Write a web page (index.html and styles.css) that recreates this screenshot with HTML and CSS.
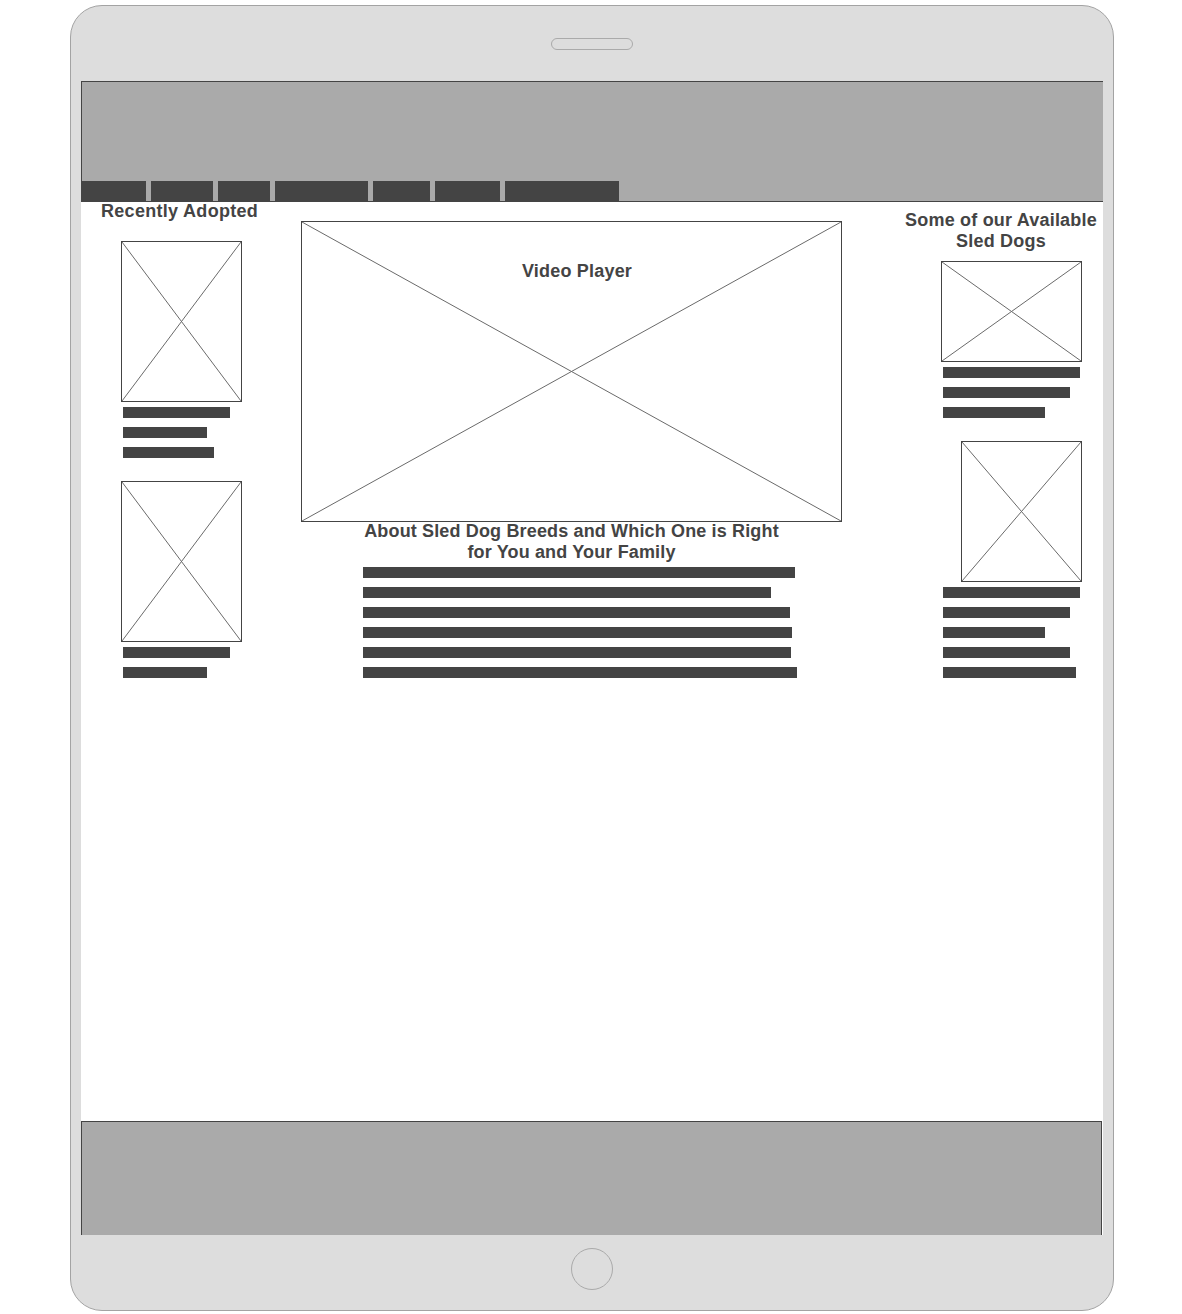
FILE: index.html
```html
<!DOCTYPE html>
<html lang="en">
<head>
    <meta charset="UTF-8">
    <meta name="viewport" content="width=device-width, initial-scale=1.0">
    <title>Sled Dog Rescue - Tablet Wireframe</title>
    <link rel="stylesheet" href="styles.css">
</head>
<body>

<div class="tablet">
    <div class="bezel-top"><div class="speaker"></div></div>

    <div class="screen">
        <header class="site-header">
            <nav class="nav">
                <span class="nav-item"></span>
                <span class="nav-item"></span>
                <span class="nav-item"></span>
                <span class="nav-item"></span>
                <span class="nav-item"></span>
                <span class="nav-item"></span>
                <span class="nav-item"></span>
            </nav>
        </header>

        <main class="content">
            <aside class="col-left">
                <h2 class="col-title">Recently Adopted</h2>

                <div class="thumb thumb-tall">
                    <svg class="cross" viewBox="0 0 100 100" preserveAspectRatio="none"><line x1="0" y1="0" x2="100" y2="100"/><line x1="100" y1="0" x2="0" y2="100"/></svg>
                </div>
                <div class="lines">
                    <span class="line w107"></span>
                    <span class="line w84"></span>
                    <span class="line w91"></span>
                </div>

                <div class="thumb thumb-tall next">
                    <svg class="cross" viewBox="0 0 100 100" preserveAspectRatio="none"><line x1="0" y1="0" x2="100" y2="100"/><line x1="100" y1="0" x2="0" y2="100"/></svg>
                </div>
                <div class="lines">
                    <span class="line w107"></span>
                    <span class="line w84"></span>
                </div>
            </aside>

            <section class="col-center">
                <div class="video">
                    <svg class="cross" viewBox="0 0 100 100" preserveAspectRatio="none"><line x1="0" y1="0" x2="100" y2="100"/><line x1="100" y1="0" x2="0" y2="100"/></svg>
                    <div class="video-label">Video Player</div>
                </div>
                <h2 class="about-title">About Sled Dog Breeds and Which One is Right for You and Your Family</h2>
                <div class="lines">
                    <span class="line w432"></span>
                    <span class="line w408"></span>
                    <span class="line w427"></span>
                    <span class="line w429"></span>
                    <span class="line w428"></span>
                    <span class="line w434"></span>
                </div>
            </section>

            <aside class="col-right">
                <h2 class="col-title">Some of our Available Sled Dogs</h2>

                <div class="thumb thumb-wide">
                    <svg class="cross" viewBox="0 0 100 100" preserveAspectRatio="none"><line x1="0" y1="0" x2="100" y2="100"/><line x1="100" y1="0" x2="0" y2="100"/></svg>
                </div>
                <div class="lines">
                    <span class="line w137"></span>
                    <span class="line w127"></span>
                    <span class="line w102"></span>
                </div>

                <div class="thumb thumb-portrait next">
                    <svg class="cross" viewBox="0 0 100 100" preserveAspectRatio="none"><line x1="0" y1="0" x2="100" y2="100"/><line x1="100" y1="0" x2="0" y2="100"/></svg>
                </div>
                <div class="lines">
                    <span class="line w137"></span>
                    <span class="line w127"></span>
                    <span class="line w102"></span>
                    <span class="line w127"></span>
                    <span class="line w133"></span>
                </div>
            </aside>
        </main>

        <footer class="site-footer"></footer>
    </div>

    <div class="bezel-bottom"><div class="home-btn"></div></div>
</div>

</body>
</html>
```

FILE: styles.css
```css
* { margin: 0; padding: 0; box-sizing: border-box; font-family: 'Liberation Sans', Arial, sans-serif; }

body { background-color: white; }

/* device frame */
.tablet { width: 1044px; height: 1306px; margin: 5px 0 0 70px; padding: 0 10px;
          background-color: #dddddd; border: 1px solid #a3a3a3; border-radius: 32px;
          display: flex; flex-direction: column; }

.bezel-top { height: 75px; display: flex; align-items: center; justify-content: center; }
.speaker { width: 82px; height: 12px; border: 1px solid #aaaaaa; border-radius: 6px; }

.bezel-bottom { height: 75px; display: flex; justify-content: center; padding-top: 13px; }
.home-btn { width: 42px; height: 42px; border: 1px solid #aaaaaa; border-radius: 50%; }

.screen { height: 1154px; background-color: white; display: flex; flex-direction: column; }

/* header + nav */
.site-header { height: 121px; background-color: #aaaaaa; border: 1px solid #444444; border-right: none;
               display: flex; flex-direction: column; justify-content: flex-end; }
.nav { display: flex; gap: 5px; height: 20px; }
.nav-item { height: 20px; background-color: #444444; }
.nav-item:nth-child(1) { width: 64px; }
.nav-item:nth-child(2) { width: 62px; }
.nav-item:nth-child(3) { width: 52px; }
.nav-item:nth-child(4) { width: 93px; }
.nav-item:nth-child(5) { width: 57px; }
.nav-item:nth-child(6) { width: 65px; }
.nav-item:nth-child(7) { width: 114px; }

/* main 3 columns */
.content { flex: 1; display: grid; grid-template-columns: 220px 541px 1fr; align-items: start; }

h2 { font-size: 18px; line-height: 21px; font-weight: bold; color: #444444; letter-spacing: 0.15px; }

.col-left .col-title { margin-top: -1px; padding-left: 20px; letter-spacing: 0.3px; }
.col-left .thumb { margin: 19px 0 0 40px; }
.col-left .thumb.next { margin-top: 23px; }
.col-left .lines { margin-left: 42px; }

.col-right .col-title { margin: 8px 0 0 57px; width: 204px; text-align: center; letter-spacing: 0.2px; }
.col-right .thumb-wide { margin: 9px 0 0 99px; }
.col-right .thumb-portrait { margin: 23px 0 0 119px; }
.col-right .lines { margin-left: 101px; }

/* placeholder images */
.thumb { border: 1px solid #444444; background-color: white; }
.thumb-tall { width: 121px; height: 161px; }
.thumb-wide { width: 141px; height: 101px; }
.thumb-portrait { width: 121px; height: 141px; }

.cross { display: block; width: 100%; height: 100%; }
.cross line { stroke: #6a6a6a; stroke-width: 1; vector-effect: non-scaling-stroke; }

.video { position: relative; margin-top: 19px; width: 541px; height: 301px; border: 1px solid #444444; }
.video .cross { position: absolute; top: 0; left: 0; }
.video-label { position: relative; padding: 39px 0 0 11px; text-align: center; letter-spacing: 0.2px;
               font-size: 18px; line-height: 21px; font-weight: bold; color: #444444; }

.about-title { max-width: 430px; margin: -1px auto 0; text-align: center; }
.col-center .lines { margin-left: 62px; margin-top: 4px; }

/* text placeholder bars */
.lines { display: flex; flex-direction: column; gap: 9px; margin-top: 5px; }
.line { display: block; height: 11px; background-color: #444444; }
.w84 { width: 84px; }
.w91 { width: 91px; }
.w102 { width: 102px; }
.w107 { width: 107px; }
.w127 { width: 127px; }
.w133 { width: 133px; }
.w137 { width: 137px; }
.w408 { width: 408px; }
.w427 { width: 427px; }
.w428 { width: 428px; }
.w429 { width: 429px; }
.w432 { width: 432px; }
.w434 { width: 434px; }

.site-footer { height: 114px; width: calc(100% - 1px); background-color: #aaaaaa;
               border: 1px solid #444444; border-bottom: none; }
```
